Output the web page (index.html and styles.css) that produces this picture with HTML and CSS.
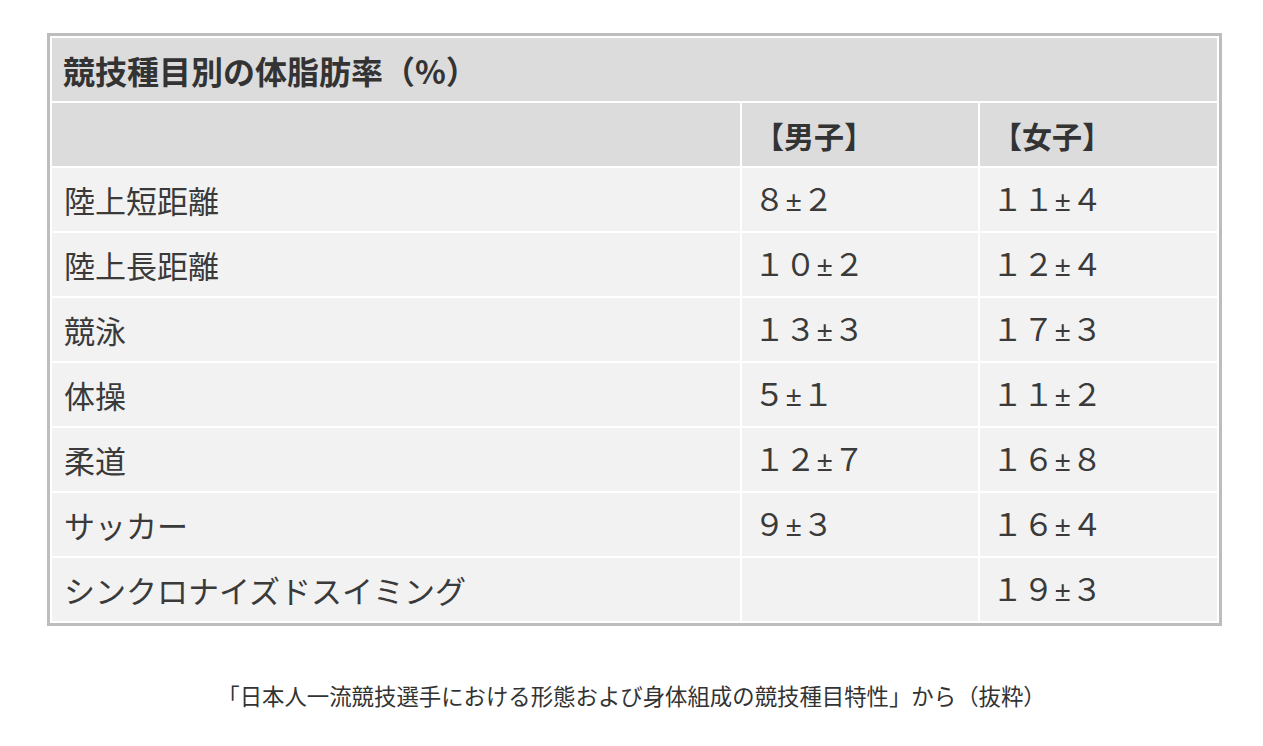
FILE: index.html
```html
<!DOCTYPE html>
<html lang="ja">
<head>
<meta charset="utf-8">
<title>競技種目別の体脂肪率</title>
<link rel="stylesheet" href="styles.css">
</head>
<body>
<div class="page">
  <table class="fat-table">
    <colgroup>
      <col class="col-sport">
      <col class="col-male">
      <col class="col-female">
    </colgroup>
    <thead>
      <tr class="title-row">
        <th colspan="3" class="title-cell">競技種目別の体脂肪率（%）</th>
      </tr>
      <tr class="head-row">
        <th></th>
        <th>【男子】</th>
        <th>【女子】</th>
      </tr>
    </thead>
    <tbody>
      <tr><td>陸上短距離</td><td>８<span class="pm">±</span>２</td><td>１１<span class="pm">±</span>４</td></tr>
      <tr><td>陸上長距離</td><td>１０<span class="pm">±</span>２</td><td>１２<span class="pm">±</span>４</td></tr>
      <tr><td>競泳</td><td>１３<span class="pm">±</span>３</td><td>１７<span class="pm">±</span>３</td></tr>
      <tr><td>体操</td><td>５<span class="pm">±</span>１</td><td>１１<span class="pm">±</span>２</td></tr>
      <tr><td>柔道</td><td>１２<span class="pm">±</span>７</td><td>１６<span class="pm">±</span>８</td></tr>
      <tr><td>サッカー</td><td>９<span class="pm">±</span>３</td><td>１６<span class="pm">±</span>４</td></tr>
      <tr><td>シンクロナイズドスイミング</td><td></td><td>１９<span class="pm">±</span>３</td></tr>
    </tbody>
  </table>
  <p class="caption">「日本人一流競技選手における形態および身体組成の競技種目特性」から（抜粋）</p>
</div>
</body>
</html>
```

FILE: styles.css
```css
html, body {
  margin: 0;
  padding: 0;
  background: #ffffff;
}

body {
  font-family: "Noto Sans CJK JP", "Noto Sans", sans-serif;
  color: #333333;
}

.page {
  padding-top: 33px;
}

.fat-table {
  margin-left: 47px;
  width: 1175px;
  table-layout: fixed;
  border-collapse: separate;
  border-spacing: 2px;
  border: 3px solid #bdbdbd;
  background: #ffffff;
}

.col-sport { width: 688px; }
.col-male { width: 236px; }
.col-female { width: 237px; }

.fat-table th,
.fat-table td {
  height: 63px;
  padding: 0 12px;
  text-align: left;
  vertical-align: middle;
  line-height: 40px;
  white-space: nowrap;
}

.fat-table td {
  background: #f2f2f2;
  font-size: 31px;
  font-weight: 400;
  color: #3a3a3a;
}

.pm {
  font-family: "Liberation Sans", Arial, sans-serif;
  font-size: 28px;
  padding: 0 1px;
}

.head-row th {
  background: #dcdcdc;
  font-size: 30px;
  font-weight: 700;
  color: #333333;
}

.title-cell {
  background: #dcdcdc;
  font-size: 32px;
  font-weight: 700;
  color: #333333;
}

.fat-table th.title-cell {
  padding-left: 11px;
}

.caption {
  margin: 54px 0 0;
  text-align: center;
  font-size: 22.4px;
  line-height: 30px;
  color: #333333;
}
```
